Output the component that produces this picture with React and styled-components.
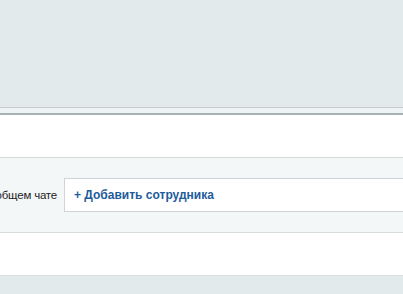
import styled, { createGlobalStyle } from 'styled-components';

const GlobalStyle = createGlobalStyle`
  html, body {
    margin: 0;
    padding: 0;
    background: #e3eaeb;
    font-family: "Liberation Sans", Arial, sans-serif;
  }
`;

const Page = styled.div`
  width: 403px;
  height: 294px;
  overflow: hidden;
  display: flex;
  flex-direction: column;
`;

const Header = styled.div`
  height: 107px;
  flex-shrink: 0;
  background: #e3eaeb;
  border-bottom: 1px solid #c6cdce;
`;

const HeaderShadow = styled.div`
  height: 5px;
  flex-shrink: 0;
  background: #eef3f3;
  border-bottom: 2px solid #aab1b2;
`;

const Content = styled.div`
  background: #fff;
  padding-top: 42px;
  padding-bottom: 42px;
  border-bottom: 1px solid #d9dede;
`;

const FieldRow = styled.div`
  display: flex;
  align-items: center;
  gap: 7px;
  padding: 20px 0;
  background: #f4f7f8;
  border-top: 1px solid #d6dada;
  border-bottom: 1px solid #d6dcdc;
`;

const Label = styled.div`
  width: 57px;
  flex-shrink: 0;
  display: flex;
  justify-content: flex-end;
  overflow: hidden;
  white-space: nowrap;
  font-size: 11.5px;
  letter-spacing: -0.2px;
  color: #1e1e1e;
`;

const AddBox = styled.div`
  flex: 1;
  height: 32px;
  margin-right: -10px;
  display: flex;
  align-items: center;
  padding-left: 9px;
  background: #fff;
  border: 1px solid #cfd4d6;
`;

const AddLink = styled.a`
  font-size: 12px;
  font-weight: bold;
  color: #1d5c9c;
  text-decoration: none;
  cursor: pointer;
`;

const Footer = styled.div`
  flex: 1;
  background: #e3eaeb;
`;

export default function App() {
  return (
    <Page>
      <GlobalStyle />
      <Header />
      <HeaderShadow />
      <Content>
        <FieldRow>
          <Label>Сотрудники в общем чате</Label>
          <AddBox>
            <AddLink>+ Добавить сотрудника</AddLink>
          </AddBox>
        </FieldRow>
      </Content>
      <Footer />
    </Page>
  );
}
